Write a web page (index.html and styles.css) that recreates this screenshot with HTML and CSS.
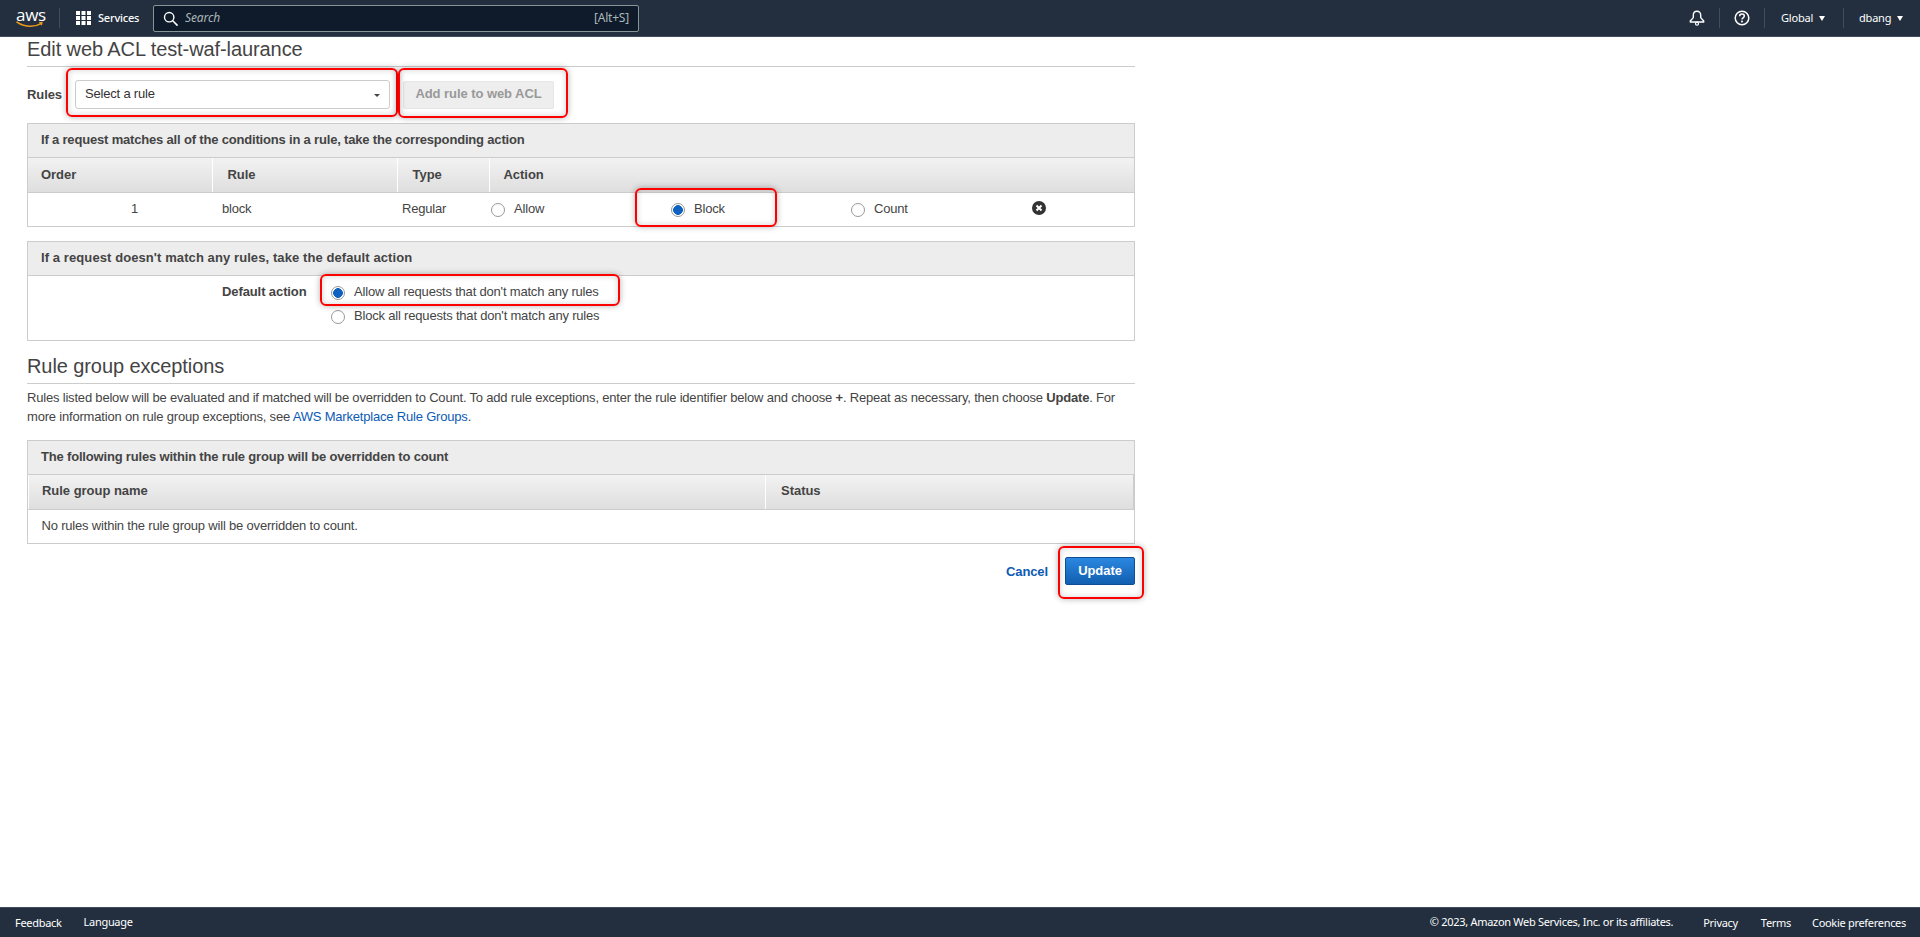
FILE: index.html
```html
<!DOCTYPE html>
<html lang="en">
<head>
<meta charset="utf-8">
<title>Edit web ACL test-waf-laurance</title>
<link rel="stylesheet" href="styles.css">
</head>
<body>
<header class="topnav">
  <a class="logo"><span class="logo-word">aws</span>
    <svg class="logo-smile" viewBox="0 0 28 8" width="28" height="8"><path d="M1 1.2C8 6 18 6.6 25 2.6" fill="none" stroke="#ec9a1e" stroke-width="1.6" stroke-linecap="round"/><path d="M22.6 1.2l4.2-.4-1 4z" fill="#ec9a1e"/></svg>
  </a>
  <span class="nav-divider nav-divider-logo"></span>
  <svg class="grid-icon" viewBox="0 0 15 14" width="15" height="14"><g fill="#fff"><rect x="0" y="0" width="4" height="4"/><rect x="5.5" y="0" width="4" height="4"/><rect x="11" y="0" width="4" height="4"/><rect x="0" y="5" width="4" height="4"/><rect x="5.5" y="5" width="4" height="4"/><rect x="11" y="5" width="4" height="4"/><rect x="0" y="10" width="4" height="4"/><rect x="5.5" y="10" width="4" height="4"/><rect x="11" y="10" width="4" height="4"/></g></svg>
  <span class="nav-services">Services</span>
  <div class="search">
    <svg class="search-icon" viewBox="0 0 16 16" width="15" height="15"><circle cx="6.6" cy="6.6" r="5" fill="none" stroke="#fff" stroke-width="1.5"/><path d="M10.4 10.4L15 15" stroke="#fff" stroke-width="1.7" stroke-linecap="round"/></svg>
    <span class="search-placeholder">Search</span>
    <span class="search-key">[Alt+S]</span>
  </div>
  <div class="nav-right">
    <svg class="nav-icon" viewBox="0 0 16 16" width="16" height="16"><path d="M8 1.200c-2.400 0-3.700 1.700-3.700 4v2.400L1.300 11v1h13.400v-1l-3-3.400V5.200c0-2.300-1.300-4-3.700-4z" fill="none" stroke="#fff" stroke-width="1.400" stroke-linejoin="round"/><circle cx="8" cy="13.700" r="1.500" fill="none" stroke="#fff" stroke-width="1.200"/></svg>
    <span class="nav-divider"></span>
    <svg class="nav-icon" viewBox="0 0 16 16" width="16" height="16"><circle cx="8" cy="8" r="6.800" fill="none" stroke="#fff" stroke-width="1.500"/><path d="M5.700 6.200c0-1.300 1-2.100 2.300-2.100s2.300.8 2.300 2c0 1.700-2.300 1.700-2.300 3.400" fill="none" stroke="#fff" stroke-width="1.500"/><circle cx="8" cy="11.600" r="1" fill="#fff"/></svg>
    <span class="nav-divider"></span>
    <span class="nav-menu nav-menu-global">Global<i class="nav-caret"></i></span>
    <span class="nav-divider"></span>
    <span class="nav-menu nav-menu-user">dbang<i class="nav-caret"></i></span>
  </div>
</header>

<main class="content">
  <h2 class="section-title">Edit web ACL test-waf-laurance</h2>

  <div class="rules-row">
    <label class="rules-label">Rules</label>
    <div class="select">Select a rule<i class="select-caret"></i></div>
    <button class="btn-disabled" type="button">Add rule to web ACL</button>
  </div>

  <section class="panel">
    <div class="panel-header">If a request matches all of the conditions in a rule, take the corresponding action</div>
    <table class="grid grid-rules">
      <thead>
        <tr><th class="c-order">Order</th><th class="c-rule">Rule</th><th class="c-type">Type</th><th class="c-action">Action</th></tr>
      </thead>
      <tbody>
        <tr>
          <td class="cell-order">1</td>
          <td class="cell-rule">block</td>
          <td class="cell-type">Regular</td>
          <td class="cell-action">
            <div class="actions">
              <label class="radio-item action-allow"><input class="radio" type="radio" name="act">Allow</label>
              <label class="radio-item action-block"><input class="radio" type="radio" name="act" checked>Block</label>
              <label class="radio-item action-count"><input class="radio" type="radio" name="act">Count</label>
              <svg class="remove-icon" viewBox="0 0 14 14" width="14" height="14"><circle cx="7" cy="7" r="7" fill="#333"/><path d="M4.500 4.500l5 5M9.500 4.500l-5 5" stroke="#fff" stroke-width="2"/></svg>
            </div>
          </td>
        </tr>
      </tbody>
    </table>
  </section>

  <section class="panel panel-default">
    <div class="panel-header panel-header-wide">If a request doesn't match any rules, take the default action</div>
    <div class="default-body">
      <span class="default-label">Default action</span>
      <div class="default-options">
        <label class="radio-item"><input class="radio" type="radio" name="def" checked>Allow all requests that don't match any rules</label>
        <label class="radio-item"><input class="radio" type="radio" name="def">Block all requests that don't match any rules</label>
      </div>
    </div>
  </section>

  <h2 class="section-title section-title-second">Rule group exceptions</h2>
  <p class="intro">Rules listed below will be evaluated and if matched will be overridden to Count. To add rule exceptions, enter the rule identifier below and choose <b>+</b>. Repeat as necessary, then choose <b>Update</b>. For more information on rule group exceptions, see <a class="link">AWS Marketplace Rule Groups</a>.</p>

  <section class="panel">
    <div class="panel-header">The following rules within the rule group will be overridden to count</div>
    <table class="grid grid-groups">
      <thead>
        <tr><th class="c-name">Rule group name</th><th class="c-status">Status</th></tr>
      </thead>
      <tbody>
        <tr><td class="cell-empty" colspan="2">No rules within the rule group will be overridden to count.</td></tr>
      </tbody>
    </table>
  </section>

  <div class="form-actions">
    <a class="cancel">Cancel</a>
    <button class="btn-primary" type="button">Update</button>
  </div>
</main>

<footer class="bottombar">
  <span class="foot-feedback">Feedback</span>
  <span class="foot-language">Language</span>
  <span class="foot-copy">© 2023, Amazon Web Services, Inc. or its affiliates.</span>
  <span class="foot-link">Privacy</span>
  <span class="foot-link">Terms</span>
  <span class="foot-link">Cookie preferences</span>
</footer>

<div class="mark mark-select"></div>
<div class="mark mark-add"></div>
<div class="mark mark-block"></div>
<div class="mark mark-allow"></div>
<div class="mark mark-update"></div>
</body>
</html>
```
FILE: styles.css
```css
* { box-sizing: border-box; }
html, body { margin: 0; height: 100%; }
body {
  position: relative;
  display: flex;
  flex-direction: column;
  height: 937px;
  overflow: hidden;
  background: #fff;
  color: #444;
  font: 13px/19px "Liberation Sans", Arial, sans-serif;
  letter-spacing: -.19px;
}

/* top navigation */
.topnav {
  flex: none;
  display: flex;
  align-items: center;
  height: 37px;
  padding-left: 16px;
  background: #232f3e;
  border-bottom: 1px solid #414d5c;
  color: #fff;
  font: 11px/16px "Noto Sans", "Open Sans", sans-serif;
  letter-spacing: -.2px;
}
.logo { position: relative; display: block; width: 28px; height: 20px; }
.logo-word {
  display: block;
  font: 17px/14px "Open Sans", sans-serif;
  text-align: center;
  letter-spacing: -.3px;
}
.logo-smile { position: absolute; left: 0; top: 13px; }
.nav-divider { flex: none; width: 1px; height: 20px; background: #414d5c; }
.nav-divider-logo { margin-left: 15px; }
.grid-icon { margin-left: 16px; flex: none; }
.nav-services { flex: none; margin-left: 7px; width: 41px; font-weight: 500; white-space: nowrap; }
.search {
  display: flex;
  align-items: center;
  width: 486px;
  height: 27px;
  margin-left: 14px;
  padding: 0 9px 0 9px;
  background: #0f1b2a;
  border: 1px solid #879596;
  border-radius: 2px;
  color: #aab7b8;
  font-size: 12px;
  letter-spacing: -.1px;
}
.search-icon { flex: none; }
.search-placeholder { margin-left: 7px; font-style: italic; }
.search-key { margin-left: auto; letter-spacing: -.2px; }
.nav-right { display: flex; align-items: center; margin-left: auto; }
.nav-right .nav-icon { flex: none; margin: 0 14px; }
.nav-right > .nav-icon:first-child { margin-left: 0; }
.nav-menu { display: flex; align-items: center; white-space: nowrap; }
.nav-menu-global { width: 78px; padding-left: 16px; }
.nav-menu-user { width: 76px; padding-left: 15px; }
.nav-caret {
  margin-left: 6px;
  border-top: 5px solid #fff;
  border-left: 3.5px solid transparent;
  border-right: 3.5px solid transparent;
}

/* content */
.content { flex: 1; width: 1135px; padding-left: 27px; }
.section-title {
  margin: 0;
  padding-bottom: 5px;
  border-bottom: 1px solid #ccc;
  font-size: 20px;
  font-weight: 400;
  line-height: 24px;
  color: #444;
  letter-spacing: -.09px;
}
.section-title-second { margin-top: 13px; }

.rules-row { display: flex; align-items: center; height: 29px; margin: 13px 0 14px; }
.rules-label { width: 48px; font-weight: 700; letter-spacing: -.1px; }
.select {
  position: relative;
  width: 315px;
  height: 29px;
  padding: 3px 9px;
  background: #fff;
  border: 1px solid #ccc;
  border-radius: 3px;
  color: #333;
}
.select-caret {
  position: absolute;
  right: 9px;
  top: 13px;
  border-top: 3px solid #444;
  border-left: 3px solid transparent;
  border-right: 3px solid transparent;
}
.btn-disabled {
  width: 151px;
  height: 28px;
  margin-left: 13px;
  padding: 0 0 2px;
  background: #eee;
  border: 1px solid #e6e6e6;
  border-radius: 2px;
  color: #999;
  font: 700 13px "Liberation Sans", Arial, sans-serif;
  letter-spacing: -.06px;
}

.panel { margin-bottom: 14px; border: 1px solid #ccc; }
.panel-header {
  height: 34px;
  padding: 6px 13px;
  background: #ededed;
  border-bottom: 1px solid #ccc;
  font-weight: 700;
  letter-spacing: -.18px;
}
.panel-header-wide { letter-spacing: .09px; }
.grid { width: 100%; border-collapse: collapse; table-layout: fixed; }
.grid th {
  height: 34px;
  padding: 0 0 1px;
  background: linear-gradient(#f2f2f2, #dedede);
  border-bottom: 1px solid #ccc;
  border-right: 1px solid #fff;
  text-align: left;
  font-weight: 700;
  letter-spacing: -.03px;
}
.grid-groups th { padding-bottom: 3px; }
.grid th:last-child { border-right: 0; }
.grid td { height: 34px; padding: 0 0 2px; vertical-align: middle; }

.c-order { width: 184px; padding-left: 13px !important; }
.c-rule { width: 185px; padding-left: 15px !important; }
.c-type { width: 92px; padding-left: 15px !important; }
.c-action { padding-left: 14px !important; }
.cell-order { padding-left: 0; padding-right: 74px !important; text-align: right; }
.cell-rule { padding-left: 10px !important; }
.cell-type { padding-left: 5px !important; }
.actions { display: flex; align-items: center; height: 31px; padding-left: 2px; }
.radio-item { display: flex; align-items: center; }
.radio {
  appearance: none;
  flex: none;
  width: 14px;
  height: 14px;
  margin: 3px 9px 0 0;
  background: #fff;
  border: 1px solid #999;
  border-radius: 50%;
}
.radio:checked {
  background: radial-gradient(circle, #0f62c0 0 4.6px, #fff 5px);
}
.action-allow { width: 180px; }
.action-block { width: 180px; }
.action-count { width: 181px; }
.remove-icon { flex: none; }

.panel-default { margin-bottom: 0; }
.default-body { display: flex; height: 64px; padding: 3px 0 0 194px; }
.default-label { width: 109px; padding-top: 3px; font-weight: 700; letter-spacing: -.1px; }
.default-options { display: flex; flex-direction: column; }
.default-options .radio-item { height: 24px; }
.default-options .radio { margin-top: 4px; }

.intro { margin: 4px 0 14px; }
.intro b { font-weight: 700; }
.link { color: #0b5bb5; }

.c-name { padding-left: 13px !important; width: 737px; border-left: 1px solid #fff; }
.c-status { padding-left: 15px !important; border-right: 1px solid #ccc !important; }
.grid .cell-empty { padding: 0 0 2px 13px; }

.form-actions { display: flex; align-items: center; justify-content: flex-end; gap: 17px; margin-top: -1px; }
.cancel { color: #0b5bb5; font-weight: 700; letter-spacing: -.1px; }
.btn-primary {
  width: 70px;
  height: 28px;
  padding: 0 0 1px;
  background: linear-gradient(#2b87e0, #115fb0);
  border: 1px solid #0d4f96;
  border-radius: 2px;
  color: #fff;
  font: 700 13px "Liberation Sans", Arial, sans-serif;
  letter-spacing: -.06px;
}

/* footer */
.bottombar {
  flex: none;
  display: flex;
  align-items: center;
  height: 30px;
  padding: 0 14px 0 15px;
  background: #232f3e;
  border-top: 1px solid #414d5c;
  color: #fff;
  font: 11px/16px "Noto Sans", "Open Sans", sans-serif;
  letter-spacing: -.3px;
}
.foot-language { margin: 0 0 2px 22px; }
.foot-copy { margin: 0 7px 2px auto; }
.foot-link { margin-left: 23px; }
.foot-link:last-child { margin-left: 21px; }

/* red review annotations, laid over the page */
.mark {
  position: absolute;
  border: 2px solid #f00;
  border-radius: 6px;
  box-shadow: 0 0 6px rgba(0, 0, 0, .3), inset 0 0 6px rgba(0, 0, 0, .18);
  pointer-events: none;
}
.mark-select { left: 66px; top: 68px; width: 332px; height: 49px; }
.mark-add { left: 398px; top: 68px; width: 170px; height: 50px; }
.mark-block { left: 635px; top: 188px; width: 142px; height: 39px; }
.mark-allow { left: 320px; top: 274px; width: 300px; height: 32px; }
.mark-update { left: 1058px; top: 546px; width: 86px; height: 53px; }
```
